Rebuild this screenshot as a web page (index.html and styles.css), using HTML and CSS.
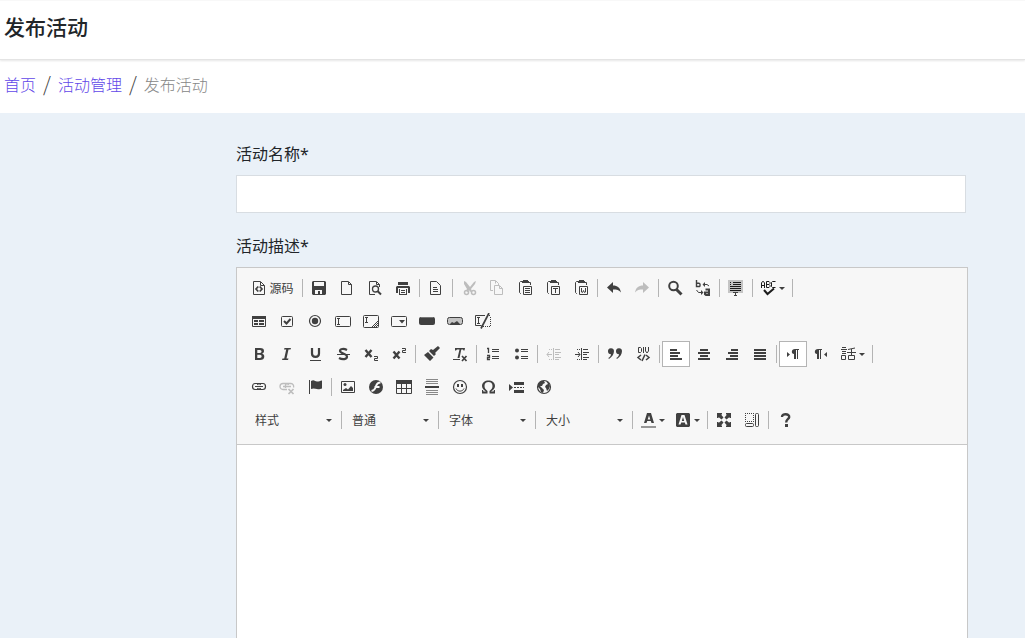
FILE: index.html
```html
<!DOCTYPE html>
<html lang="zh-CN">
<head>
<meta charset="utf-8">
<title>发布活动</title>
<link rel="stylesheet" href="styles.css">
</head>
<body>
<header class="page-header"><h1>发布活动</h1></header>
<nav class="breadcrumb" aria-label="breadcrumb">
  <a href="#">首页</a><span class="slash">/</span><a href="#">活动管理</a><span class="slash">/</span><span class="current">发布活动</span>
</nav>
<main class="content">
  <form class="form">
    <div class="field">
      <label for="name">活动名称*</label>
      <input id="name" type="text" class="text-input">
    </div>
    <div class="field field-grow">
      <label for="description">活动描述*</label>
      <div class="editor">
        <div class="toolbar">
          <div class="row">
            <button type="button" class="btn source"><svg viewBox="0 0 16 16"><path d="M2.500 1.500h7l4 4v9h-11zM9.500 2v3.500h4"/><path stroke-width="1.700" d="M7.300 6.500l-2.300 2.500 2.300 2.500M8.700 6.500l2.300 2.500-2.300 2.500"/></svg><span>源码</span></button>
            <i class="sep"></i>
            <button type="button" class="btn" aria-label="保存"><svg viewBox="0 0 16 16"><path class="solid" fill-rule="evenodd" d="M2 1h12l1 1v12l-1 1H2l-1-1V2zM3 2v4h10V2zM4 10v4h3v-3h2v3h2v-4z"/></svg></button>
            <button type="button" class="btn" aria-label="新建"><svg viewBox="0 0 16 16"><path d="M2.500 1.500h7l3 3v10h-10zM9.500 2v2.500h3"/></svg></button>
            <button type="button" class="btn" aria-label="预览"><svg viewBox="0 0 16 16"><path d="M8 14.500H2.500v-13h7l3 3V7M9.500 2v2.500h3"/><circle cx="8.500" cy="9" r="3" stroke-width="1.300"/><path stroke-width="2" d="M10.500 11l3.500 3.500"/></svg></button>
            <button type="button" class="btn" aria-label="打印"><svg viewBox="0 0 16 16"><path class="solid" d="M3 2h10v3H3zM2 6h12l1 1v6h-2V8H3v5H1V7z"/><path class="solid" fill-rule="evenodd" d="M4 9h8v6H4zM5 9v5h6V9zM6 10h4v1H6zM6 12h4v1H6z"/></svg></button>
            <i class="sep"></i>
            <button type="button" class="btn" aria-label="模板"><svg viewBox="0 0 16 16"><path d="M2.500 1.500h6l4 4v9h-10zM5 7.500h4M5 9.500h5M5 11.500h5"/></svg></button>
            <i class="sep"></i>
            <button type="button" class="btn off" aria-label="剪切"><svg viewBox="0 0 16 16"><path class="solid" d="M3 1l2 1 4 5 4-5 2-1-1 3-4 5 1 2-2 1-1-2-1 2-2-1 1-2-3-5z"/><circle cx="5.500" cy="12.500" r="2" stroke-width="1.500"/><circle cx="12.500" cy="12.500" r="2" stroke-width="1.500"/></svg></button>
            <button type="button" class="btn off" aria-label="复制"><svg viewBox="0 0 16 16"><path d="M4 10.500H1.500v-10h5l3 3V5M6.500 1v2.500M5.500 5.500h5l3 3v6h-8zM10.500 6v2.500h3"/></svg></button>
            <button type="button" class="btn" aria-label="粘贴"><svg viewBox="0 0 16 16"><path d="M4 13.500H3.500l-1-1v-10l1-1H5M12 2.500h1.500V5M6.500 6.500h8v8h-8zM8 8.500h5M8 10.500h5M8 12.500h5"/><path class="solid" d="M5 1h1V0h5v1h1v2H5z"/></svg></button>
            <button type="button" class="btn" aria-label="粘贴为无格式文本"><svg viewBox="0 0 16 16"><path d="M4 13.500H3.500l-1-1v-10l1-1H5M12 2.500h1.500V5M6.500 6.500h8v8h-8zM8 8.500h5M10.500 8.500V13"/><path class="solid" d="M5 1h1V0h5v1h1v2H5z"/></svg></button>
            <button type="button" class="btn" aria-label="从 MS Word 粘贴"><svg viewBox="0 0 16 16"><path d="M4 13.500H3.500l-1-1v-10l1-1H5M12 2.500h1.500V5M6.500 6.500h8v8h-8zM8.500 8v4l1 .5 1-2 1 2 1-.5V8"/><path class="solid" d="M5 1h1V0h5v1h1v2H5z"/></svg></button>
            <i class="sep"></i>
            <button type="button" class="btn" aria-label="撤消"><svg viewBox="0 0 16 16"><path class="solid" d="M1 7.500L7 2v3.500c4.500 0 7 2 8 7-2-2.500-4-3-8-3V13z"/></svg></button>
            <button type="button" class="btn off" aria-label="重做"><svg viewBox="0 0 16 16"><path class="solid" d="M15 7.500L9 2v3.500c-4.500 0-7 2-8 7 2-2.500 4-3 8-3V13z"/></svg></button>
            <i class="sep"></i>
            <button type="button" class="btn" aria-label="查找"><svg viewBox="0 0 16 16"><circle cx="6.500" cy="6" r="4.300" stroke-width="2"/><path stroke-width="3" d="M9.500 9.500l5 5"/></svg></button>
            <button type="button" class="btn" aria-label="替换"><svg viewBox="0 0 16 16"><path stroke-width="1.400" d="M1.500 0v6.500h3l.5-.5V4l-1-.7H1.500"/><path stroke-width="2" d="M10.500 9.500H14V15h-3l-1-.7V12.500h4"/><path d="M9 4.500h3l2 1.500M1.500 10l2 2.500h3"/><path class="solid" d="M7.500 4.500L10 2v5zM8.500 12.500L6 10v5z"/></svg></button>
            <i class="sep"></i>
            <button type="button" class="btn" aria-label="全选"><svg viewBox="0 0 16 16"><path class="shade" d="M0 0h15v13H0z"/><path class="ink" d="M2 2.500h1M5 2.500h8M2 4.500h1M5 4.500h8M2 6.500h11M2 8.500h11M2 10.500h11"/><path d="M5 12.500h5M7.500 12.500v3M6 15.500h3"/></svg></button>
            <i class="sep"></i>
            <button type="button" class="btn menu" aria-label="拼写检查"><svg viewBox="0 0 16 16"><path class="ink" d="M.5 8V3l1-1.500h1L3.500 3v5M1 5.500h2M5.500 7.500v-6h2.500l1 1v1l-1 1H6h2l1 1v1l-1 1zM14.500 1.500h-3l-1 1v4l1 1h3"/><path class="ink" stroke-width="2" d="M3 10l3.500 4L13 8.500"/></svg><b class="caret"></b></button>
            <i class="sep"></i>
          </div>
          <div class="row">
            <button type="button" class="btn" aria-label="表单"><svg viewBox="0 0 16 16"><path d="M1.500 3.500h13v10h-13z"/><path class="solid" d="M1 3h14v3H1zM3 7h4v2H3zM3 10h4v2H3zM8 7h5v2H8zM8 10h5v2H8z"/></svg></button>
            <button type="button" class="btn" aria-label="复选框"><svg viewBox="0 0 16 16"><rect x="2.500" y="3.500" width="11" height="10" rx="1"/><path stroke-width="2" d="M5 8l2.500 2.500L11.500 6"/></svg></button>
            <button type="button" class="btn" aria-label="单选按钮"><svg viewBox="0 0 16 16"><circle cx="8" cy="8" r="5.500" stroke-width="1.200"/><circle class="solid" cx="8" cy="8" r="3.200"/></svg></button>
            <button type="button" class="btn" aria-label="单行文本"><svg viewBox="0 0 16 16"><rect x=".5" y="3.500" width="15" height="10" rx="1"/><path d="M2 5.500h1M4 5.500h1M3.500 5v7M2 11.500h3"/></svg></button>
            <button type="button" class="btn" aria-label="多行文本"><svg viewBox="0 0 16 16"><rect x=".5" y="2.500" width="15" height="12" rx="1"/><path d="M2 4.500h3M3.500 4.500v5M2 9.500h3M9 14l6-6M11 14l4-4M13 14l2-2"/></svg></button>
            <button type="button" class="btn" aria-label="列表/菜单"><svg viewBox="0 0 16 16"><rect x=".5" y="3.500" width="15" height="10" rx="1"/><path class="solid" d="M8 7h6l-3 3.500z"/></svg></button>
            <button type="button" class="btn" aria-label="按钮"><svg viewBox="0 0 16 16"><rect class="solid" y="4" width="16" height="8" rx="2"/><path class="glint" d="M2 4.500h12"/></svg></button>
            <button type="button" class="btn" aria-label="图像域"><svg viewBox="0 0 16 16"><rect class="shade" x="1" y="4" width="14" height="7"/><rect x=".5" y="4.500" width="15" height="7" rx="2"/><path class="solid" d="M3 11l2-2 2 1 3-2 3 3z"/></svg></button>
            <button type="button" class="btn" aria-label="隐藏域"><svg viewBox="0 0 16 16"><path d="M10 2.500H.5v10h6M2 4.500h3M3.500 4.500v6M2 10.500h3"/><path stroke-dasharray="1 1" d="M12 2.500h3.500M15.500 4v9.500H8"/><path stroke-width="1.700" d="M14 0L6 15.500"/></svg></button>
          </div>
          <div class="row">
            <button type="button" class="btn" aria-label="加粗"><svg viewBox="0 0 16 16"><path fill-rule="evenodd" class="solid" d="M4 2h5c3 0 4 1 4 3 0 1.500-.8 2.300-2 2.800 1.600.3 2.300 1.300 2.300 2.700 0 2.500-1.600 3.500-4.300 3.500H4zM6.300 4v3H9c2 0 2-3 0-3zM6.300 8.800V12H9c2.200 0 2.200-3.200 0-3.200z"/></svg></button>
            <button type="button" class="btn" aria-label="倾斜"><svg viewBox="0 0 16 16"><path class="solid" d="M5.500 2h6.500l-.5 1.500h-2L7.500 12.500h2L9 14H3l.5-1.500h1.700l2-9H5z"/></svg></button>
            <button type="button" class="btn" aria-label="下划线"><svg viewBox="0 0 16 16"><path stroke-width="2.200" d="M5 2v5.500c0 4.500 7 4.500 7 0V2"/><path d="M3 14.500h11"/></svg></button>
            <button type="button" class="btn" aria-label="删除线"><svg viewBox="0 0 16 16"><path stroke-width="2.200" d="M12 4C9 2.500 5 2.500 5 5s7 2.500 7 5.500-4.500 3.500-8 1.500"/><path d="M2 8.500h13"/></svg></button>
            <button type="button" class="btn" aria-label="下标"><svg viewBox="0 0 16 16"><path stroke-width="2.400" d="M2.500 4l6 7M8.500 4l-6 7"/><path d="M11 10.500h3.500v2h-3v2H15"/></svg></button>
            <button type="button" class="btn" aria-label="上标"><svg viewBox="0 0 16 16"><path stroke-width="2.400" d="M2.500 5.500l6 7M8.500 5.500l-6 7"/><path d="M11 2.500h3.500v2h-3v2H15"/></svg></button>
            <i class="sep"></i>
            <button type="button" class="btn" aria-label="复制格式"><svg viewBox="0 0 16 16"><path class="solid" d="M14 0l2 2-5 5 1 1-2 2-5-5 2-2 2 1zM4 6l5.500 5.500L6 15 0 9z"/></svg></button>
            <button type="button" class="btn" aria-label="清除格式"><svg viewBox="0 0 16 16"><path class="solid" d="M3 2h10l-.5 2.500h-1L11 3.500H9.300L7.500 12h-2l2-8.500H5L4 4.500H3z"/><path d="M1 13.500h7"/><path stroke-width="1.700" d="M10 10l4.500 5M14.500 10L10 15"/></svg></button>
            <i class="sep"></i>
            <button type="button" class="btn" aria-label="编号列表"><svg viewBox="0 0 16 16"><path stroke-width="1.300" d="M2 2.500h1.500V7M2 9.500h2.500v2h-2v2H5"/><path d="M7 3.500h7M7 5.500h7M7 10.500h7M7 12.500h7"/></svg></button>
            <button type="button" class="btn" aria-label="项目列表"><svg viewBox="0 0 16 16"><circle class="solid" cx="4" cy="4.500" r="2"/><circle class="solid" cx="4" cy="11.500" r="2"/><path d="M8 3.500h7M8 5.500h7M8 10.500h7M8 12.500h7"/></svg></button>
            <i class="sep"></i>
            <button type="button" class="btn off" aria-label="减少缩进"><svg viewBox="0 0 16 16"><path d="M1 8.500h5M3 6L1 8.500 3 11M7.500 2v12M9 3.500h5M9 6.500h6M9 8.500h4M9 11.500h6M9 13.500h4"/><path stroke-dasharray="1 1" d="M3 3.500h4M3 13.500h4"/></svg></button>
            <button type="button" class="btn" aria-label="增加缩进"><svg viewBox="0 0 16 16"><path d="M1 8.500h5M4 6l2 2.500L4 11M7.500 2v12M9 3.500h5M9 6.500h6M9 8.500h4M9 11.500h6M9 13.500h4"/><path stroke-dasharray="1 1" d="M3 3.500h4M3 13.500h4"/></svg></button>
            <i class="sep"></i>
            <button type="button" class="btn" aria-label="块引用"><svg viewBox="0 0 16 16"><path class="solid" d="M1 5.500a3 3 0 0 1 6-.5c0 3-2 6-5 8l-.7-1C3 11 4 9.800 4 8.300 2 8.300 1 7 1 5.500zM9 5.500a3 3 0 0 1 6-.5c0 3-2 6-5 8l-.7-1C11 11 12 9.800 12 8.300c-2 0-3-1.300-3-2.800z"/></svg></button>
            <button type="button" class="btn" aria-label="创建 DIV 容器"><svg viewBox="0 0 16 16"><path d="M3.500 1.500v5h2l1-1v-3l-1-1zM8.500 1v6M10.500 1v4l1.500 2 1.500-2V1"/><path stroke-width="1.500" d="M6 9l-3 2.500L6 14M11 9l3 2.500-3 2.500M10 8.500l-3 6.500"/></svg></button>
            <i class="sep"></i>
            <button type="button" class="btn on" aria-label="左对齐"><svg viewBox="0 0 16 16"><path class="solid" d="M2 3h7v2H2zM2 6h10v2H2zM2 9h8v2H2zM2 12h12v2H2z"/></svg></button>
            <button type="button" class="btn" aria-label="居中"><svg viewBox="0 0 16 16"><path class="solid" d="M4 3h8v2H4zM2 6h12v2H2zM4 9h8v2H4zM2 12h12v2H2z"/></svg></button>
            <button type="button" class="btn" aria-label="右对齐"><svg viewBox="0 0 16 16"><path class="solid" d="M7 3h7v2H7zM4 6h10v2H4zM6 9h8v2H6zM2 12h12v2H2z"/></svg></button>
            <button type="button" class="btn" aria-label="两端对齐"><svg viewBox="0 0 16 16"><path class="solid" d="M2 3h12v2H2zM2 6h12v2H2zM2 9h12v2H2zM2 12h12v2H2z"/></svg></button>
            <i class="sep"></i>
            <button type="button" class="btn on" aria-label="文字方向为从左至右"><svg viewBox="0 0 16 16"><path class="solid" d="M2 6l3 2.500L2 11zM14 3v1h-1v9h-1V4h-1v9H9V8C6 8 6 3 10 3z"/></svg></button>
            <button type="button" class="btn" aria-label="文字方向为从右至左"><svg viewBox="0 0 16 16"><path class="solid" d="M14 6l-3 2.500 3 2.500zM9 3v1H8v9H7V4H6v9H4V8C1 8 1 3 5 3z"/></svg></button>
            <button type="button" class="btn menu" aria-label="设置语言"><svg viewBox="0 0 16 16"><path d="M0 3.500h6M1 1.500h4M1 5.500h4M1 7.500h4M.5 9.500h4v4h-4zM7 3.500l7-1.500M6 6.500h9M10.500 3v7M7.500 9.500h6v4h-6z"/></svg><b class="caret"></b></button>
            <i class="sep"></i>
          </div>
          <div class="row">
            <button type="button" class="btn" aria-label="插入链接"><svg viewBox="0 0 16 16"><path stroke-width="1.200" d="M9.500 6V6a2 2 0 0 0-2-1.500H4a2.500 3 0 0 0 0 6h3.500a2 2 0 0 0 2-1.500M6.500 6a2 2 0 0 1 2-1.500H12a2.500 3 0 0 1 0 6H8.500a2 2 0 0 1-2-1.500M4 7.500h8"/></svg></button>
            <button type="button" class="btn off" aria-label="取消链接"><svg viewBox="0 0 16 16"><path stroke-width="1.300" d="M8 10.500H4a3 3 0 0 1 0-6h3.500a2 2 0 0 1 2 1.500M6.500 9V6a2 2 0 0 1 2-1.500H12a3 3 0 0 1 2.500 4M4 7.500h8"/><path stroke-width="1.700" d="M9.500 10l5 5M14.500 10l-5 5"/></svg></button>
            <button type="button" class="btn" aria-label="锚点链接"><svg viewBox="0 0 16 16"><path d="M2.500 1v14"/><path class="solid" d="M4 2c3-2 4 .5 6 .5S13 2 15 1.500v8c-2 .5-3 1-5 .5s-4-1-6 0z"/></svg></button>
            <i class="sep"></i>
            <button type="button" class="btn" aria-label="图像"><svg viewBox="0 0 16 16"><path d="M1.500 2.500h13v11h-13z"/><path class="solid" d="M3 12v-1l3-2 2 1.500L11 7l2 2v3z"/><circle class="solid" cx="5" cy="5.500" r="1.500"/></svg></button>
            <button type="button" class="btn" aria-label="Flash"><svg viewBox="0 0 16 16"><circle class="solid" cx="8" cy="8" r="7"/><path class="cut" d="M12.500 3.500c-4 0-4 2.500-5 5-.7 2-1.500 3-4 3.500M6.500 8h5"/></svg></button>
            <button type="button" class="btn" aria-label="表格"><svg viewBox="0 0 16 16"><path class="solid" d="M0 1h16v4H0z"/><path d="M.5 4.500v10h15v-10M5.500 5v9M10.500 5v9M1 9.500h14"/></svg></button>
            <button type="button" class="btn" aria-label="插入水平线"><svg viewBox="0 0 16 16"><path stroke-opacity=".6" d="M2 .5h12M2 2.500h12M2 4.500h12M2 11.500h12M2 13.500h12M2 15.500h12"/><path class="solid" d="M1 7h14v2H1z"/></svg></button>
            <button type="button" class="btn" aria-label="表情符"><svg viewBox="0 0 16 16"><circle cx="8" cy="8" r="6.500" stroke-width="1.200"/><path stroke-width="2" d="M6 5v3M10 5v3"/><path d="M4 9.500c1.500 3.500 6.500 3.500 8 0"/></svg></button>
            <button type="button" class="btn" aria-label="插入特殊符号"><svg viewBox="0 0 16 16"><path class="solid" d="M2 11h1l.5 1.500H6C3.500 11 2 9 2 7c0-3.500 3-5.500 6.500-5.500S15 3.500 15 7c0 2-1.500 4-4 5.500h2.500L14 11h1v3.500H9.500V12c2-1.500 3-3 3-5 0-2.500-1.500-4-4-4s-4 1.500-4 4c0 2 1 3.500 3 5v2.500H2z"/></svg></button>
            <button type="button" class="btn" aria-label="插入打印分页符"><svg viewBox="0 0 16 16"><path class="solid" d="M1 5l4 3.500L1 12zM6 3h10v3H6zM6 11h10v3H6z"/><path stroke-dasharray="2 1" d="M6 8.500h10"/></svg></button>
            <button type="button" class="btn" aria-label="IFrame"><svg viewBox="0 0 16 16"><circle cx="8" cy="8" r="6.500" stroke-width="1.200"/><path class="solid" d="M2 5l3-3h3l1 2-2 1-1 2H4l2 2 2 2-1 3-2-1-1-3-2-2zM10 2l3 2 1 3-1 3-2 2-1-3-1-1 1-2 2-1z"/></svg></button>
          </div>
          <div class="row combos">
            <label class="combo"><select aria-label="样式"><option>样式</option></select><b class="caret"></b></label>
            <i class="sep"></i>
            <label class="combo"><select aria-label="格式"><option>普通</option></select><b class="caret"></b></label>
            <i class="sep"></i>
            <label class="combo"><select aria-label="字体"><option>字体</option></select><b class="caret"></b></label>
            <i class="sep"></i>
            <label class="combo"><select aria-label="大小"><option>大小</option></select><b class="caret"></b></label>
            <i class="sep"></i>
            <button type="button" class="btn menu" aria-label="文本颜色"><svg viewBox="0 0 16 16"><path class="solid" fill-rule="evenodd" d="M6 1h4l3 10h-2.500l-.7-2H6.200l-.7 2H3zM8 3.500L6.700 7.500h2.600z"/><path class="solid tint" d="M0 14h15v2H0z"/></svg><b class="caret"></b></button>
            <button type="button" class="btn menu" aria-label="背景颜色"><svg viewBox="0 0 16 16"><path class="solid" fill-rule="evenodd" d="M1 1h12l1 1v12l-1 1H1l-1-1V2zM5.500 3L2.500 12.500h2l.7-2h3.600l.7 2h2L8.500 3zM7 5l1.200 4H5.800z"/></svg><b class="caret"></b></button>
            <i class="sep"></i>
            <button type="button" class="btn" aria-label="全屏"><svg viewBox="0 0 16 16"><path class="solid" d="M1 1h5v1.500H5L7.500 5.500 5.500 7.500 2.500 5v1H1zM15 1v5h-1.500V5l-3 2.500-2-2L11 2.500h-1V1zM1 15v-5h1.500v1l3-2.500 2 2L5 13.500h1V15zM15 15h-5v-1.500h1l-2.500-3 2-2 3 2.500v-1H15z"/></svg></button>
            <button type="button" class="btn" aria-label="显示区块"><svg viewBox="0 0 16 16"><path stroke-dasharray="1 1" d="M1 1.500h9M1.500 1v9M1 9.500h9M9.500 1v9"/><rect x="11.500" y="1.500" width="3" height="13" rx="1"/><rect x="1.500" y="11.500" width="8" height="3" rx="1"/></svg></button>
            <i class="sep"></i>
            <button type="button" class="btn" aria-label="关于"><svg viewBox="0 0 16 16"><path stroke-width="2.400" d="M5 5C5 1 12.700 1.500 12.200 5c-.3 2.500-3 2-3 5.500"/><path class="solid" d="M8 12h3v3H8z"/></svg></button>
          </div>
        </div>
        <textarea id="description" class="editor-body"></textarea>
      </div>
    </div>
  </form>
</main>
</body>
</html>
```
FILE: styles.css
```css
* { box-sizing: border-box; }
body {
  margin: 0;
  height: 100vh;
  display: flex;
  flex-direction: column;
  background: #fff;
  color: #212529;
  font: 16px/24px "Noto Sans CJK SC", sans-serif;
}
.page-header {
  padding: 10px 4px 18px;
  border-top: 1px solid #f8f8f8;
  border-bottom: 1px solid #e4e4e4;
  box-shadow: 0 1px 2px #0000001a;
}
h1 { margin: 0; font-size: 21px; line-height: 30px; font-weight: 500; }
.breadcrumb {
  display: flex;
  align-items: center;
  gap: 7px;
  padding: 12px 4px 17px;
  font-weight: 300;
}
.breadcrumb a { color: #6147e8; text-decoration: none; }
.slash { color: #444; font-size: 20px; }
.current { color: #868686; }
.content {
  flex: 1;
  min-height: 0;
  display: flex;
  background: #eaf1f8;
}
.form {
  flex: 1;
  display: flex;
  flex-direction: column;
  gap: 21px;
  padding: 29px 57px 0 236px;
}
.field { display: flex; flex-direction: column; gap: 9px; }
.field label[for] { font-family: "Noto Sans", "Noto Sans CJK SC", sans-serif; }
.field-grow { flex: 1; }
.text-input {
  height: 38px;
  margin-right: 2px;
  padding: 6px 12px;
  border: 1px solid #d8dde2;
  background: #fff;
  font: inherit;
}
.editor {
  flex: 1;
  display: flex;
  flex-direction: column;
  border: 1px solid #c8c8c8;
  border-bottom: 0;
  background: #fff;
}
.toolbar {
  display: flex;
  flex-direction: column;
  gap: 7px;
  padding: 7px 8px 11px;
  border-bottom: 1px solid #c8c8c8;
  background: #f7f7f7;
}
.row { display: flex; align-items: center; }
.combos { padding-left: 2px; }
.btn {
  display: flex;
  align-items: center;
  justify-content: center;
  width: 28px;
  height: 26px;
  padding: 0;
  border: 0;
  background: none;
  color: #404040;
}
.btn svg { width: 16px; height: 16px; fill: none; stroke: currentColor; }
.btn .solid { fill: currentColor; stroke: none; }
.btn .tint { fill: #969696; }
.btn .shade { fill: #c4c4c4; stroke: none; }
.btn .ink { stroke: #1c1c1c; }
.btn .glint { stroke: #777; }
.btn .cut { stroke: #f7f7f7; stroke-width: 2px; }
.off { color: #bdbdbd; }
.on { border: 1px solid #b4b4b4; background: #fff; }
.source { width: 55px; gap: 2px; font: 12px/16px "Noto Sans CJK SC", sans-serif; }
.menu { width: 35px; gap: 2px; }
.sep { width: 1px; height: 18px; margin: 0 2px; background: #b4b4b4; }
.caret {
  border: 3px solid transparent;
  border-top-color: #404040;
  border-bottom: 0;
}
.combo {
  display: flex;
  align-items: center;
  width: 92px;
  height: 26px;
  padding: 0 7px 0 8px;
}
.combo select {
  flex: 1;
  min-width: 0;
  padding: 0;
  border: 0;
  appearance: none;
  background: none;
  color: #404040;
  font: 12px/20px "Noto Sans CJK SC", sans-serif;
}
.editor-body {
  flex: 1;
  width: 100%;
  padding: 20px;
  border: 0;
  resize: none;
  outline: 0;
  font: inherit;
}
```
